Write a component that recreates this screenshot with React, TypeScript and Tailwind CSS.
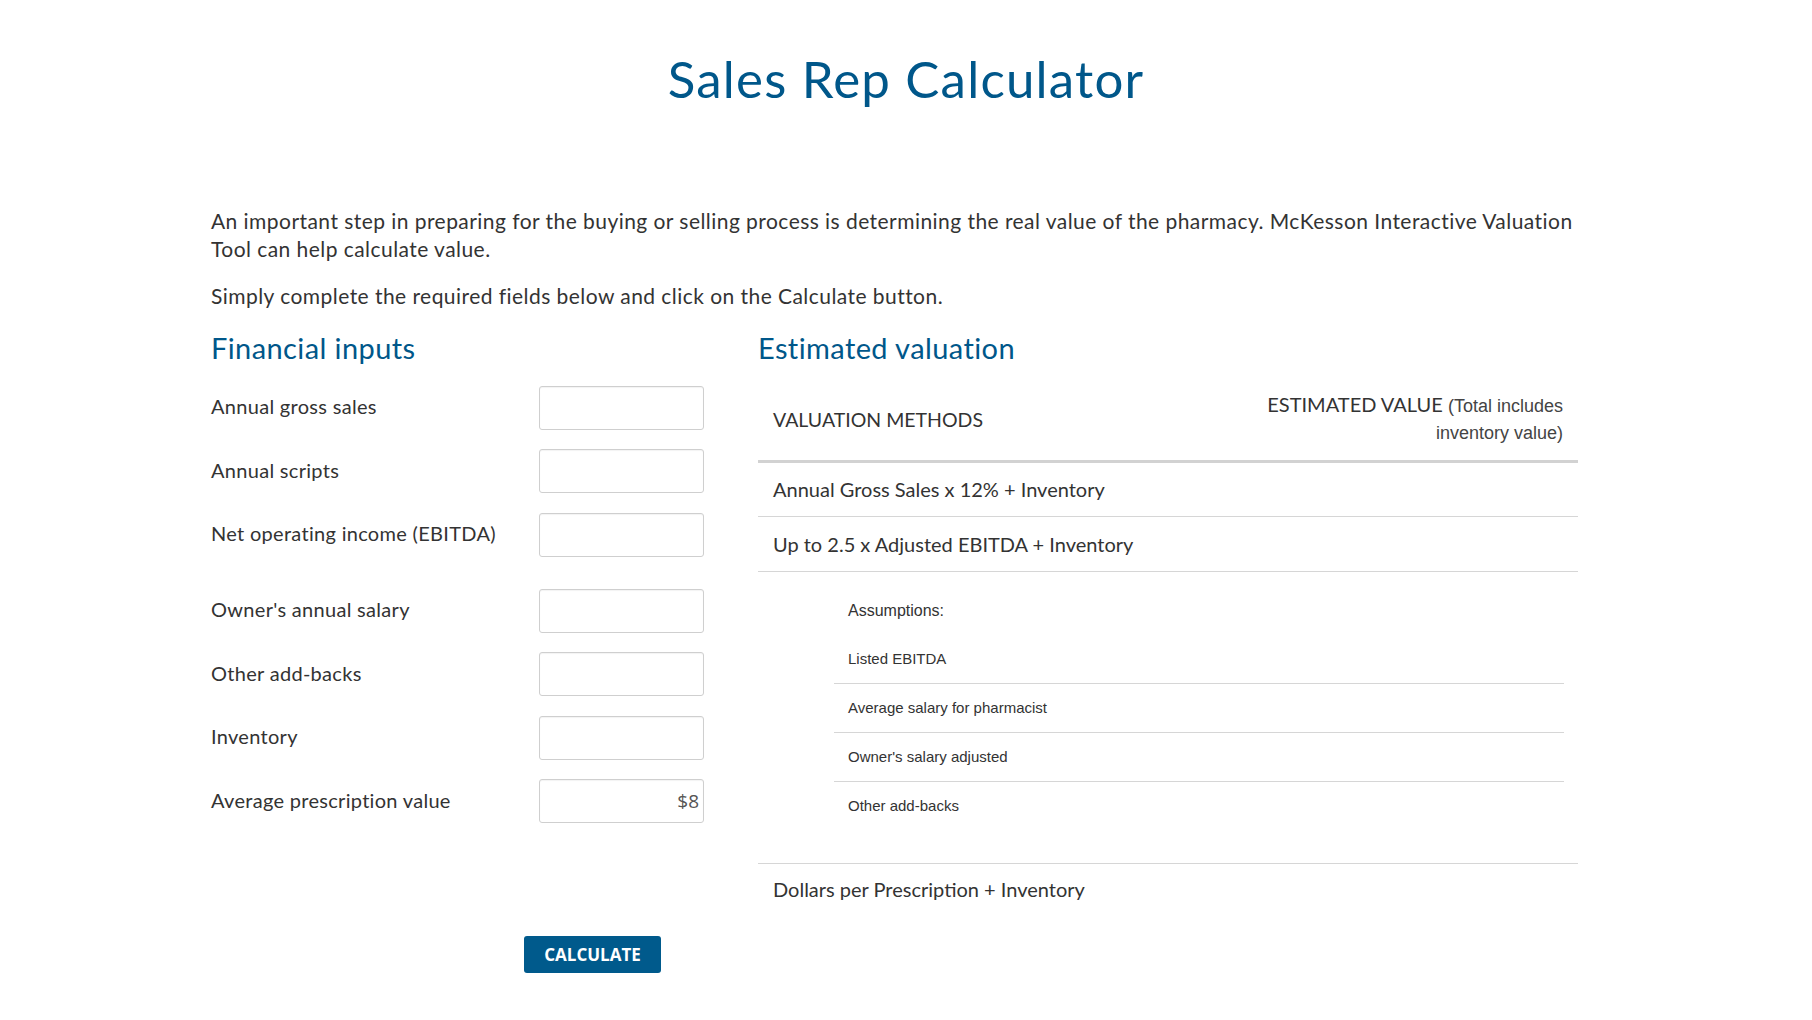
import React from "react";

const inputs = [
  { label: "Annual gross sales", value: "" },
  { label: "Annual scripts", value: "" },
  { label: "Net operating income (EBITDA)", value: "", extra: true },
  { label: "Owner's annual salary", value: "" },
  { label: "Other add-backs", value: "" },
  { label: "Inventory", value: "" },
  { label: "Average prescription value", value: "$8" },
];

const assumptions = [
  "Listed EBITDA",
  "Average salary for pharmacist",
  "Owner's salary adjusted",
  "Other add-backs",
];

function InputRow({ label, value, extra }: { label: string; value: string; extra?: boolean }) {
  return (
    <div className={`flex items-center ${extra ? "mb-[32px]" : "mb-[19.5px]"}`}>
      <label className="-mt-[3px] w-[328px] text-[20px] tracking-[0.3px] text-[#333]">{label}</label>
      <input
        readOnly
        value={value}
        className="h-[44px] w-[165px] rounded-[3px] border border-[#cfcfcf] bg-white pr-[4px] text-right font-['Open_Sans'] text-[19px] text-[#555] shadow-[inset_0_1px_1px_rgba(0,0,0,0.05)] outline-none"
      />
    </div>
  );
}

export default function App() {
  return (
    <div className="min-h-screen bg-white font-['Lato',sans-serif] text-[#333]">
      <h1 className="pt-[48px] text-center text-[51px] leading-[1.2] tracking-[1.2px] text-[#00578a]">
        Sales Rep Calculator
      </h1>

      <div className="ml-[211px] mt-[98px] w-[1390px]">
        <p className="text-[21px] leading-[28px] tracking-[0.45px]">
          An important step in preparing for the buying or selling process is determining the real value of the pharmacy.
          McKesson Interactive Valuation Tool can help calculate value.
        </p>
        <p className="mt-[19px] text-[21px] leading-[28px] tracking-[0.45px]">
          Simply complete the required fields below and click on the Calculate button.
        </p>

        <div className="mt-[21px] flex">
          {/* left column */}
          <div className="w-[547px]">
            <h2 className="mb-[20px] text-[29px] leading-[1.2] tracking-[0.4px] text-[#00578a]">Financial inputs</h2>
            {inputs.map((r) => (
              <InputRow key={r.label} {...r} />
            ))}
            <button className="ml-[313px] mt-[93px] h-[37px] w-[137px] rounded-[3px] bg-[#005a8c] font-['Open_Sans'] text-[17px] font-bold text-white">
              CALCULATE
            </button>
          </div>

          {/* right column */}
          <div className="w-[820px]">
            <h2 className="mb-[13px] text-[29px] leading-[1.2] tracking-[0.4px] text-[#00578a]">Estimated valuation</h2>

            <div className="flex items-center justify-between border-b-[3px] border-[#d2d2d2] px-[15px] py-[13.5px]">
              <span className="text-[19.5px] uppercase">Valuation Methods</span>
              <span className="text-right text-[20px] leading-[25px]">
                ESTIMATED VALUE{" "}
                <span className="font-['Liberation_Sans',sans-serif] text-[18px] text-[#444]">
                  (Total includes
                  <br />
                  inventory value)
                </span>
              </span>
            </div>

            <div className="flex h-[54px] items-center border-b border-[#d6d6d6] px-[15px] text-[20px]">
              Annual Gross Sales x 12% + Inventory
            </div>
            <div className="flex h-[55px] items-center border-b border-[#d6d6d6] px-[15px] text-[20px]">
              Up to 2.5 x Adjusted EBITDA + Inventory
            </div>

            <div className="border-b border-[#d6d6d6] pb-[32px] pl-[76px] pr-[14px] pt-[15px] font-['Liberation_Sans',sans-serif] text-[15px] text-[#333]">
              <div className="flex h-[48px] items-center pl-[14px] text-[16px]">Assumptions:</div>
              {assumptions.map((a, i) => (
                <div
                  key={a}
                  className={`flex h-[49px] items-center pl-[14px] ${i < assumptions.length - 1 ? "border-b border-[#d6d6d6]" : ""}`}
                >
                  {a}
                </div>
              ))}
            </div>

            <div className="flex h-[50px] items-center px-[15px] text-[20px]">
              Dollars per Prescription + Inventory
            </div>
          </div>
        </div>
      </div>
    </div>
  );
}
